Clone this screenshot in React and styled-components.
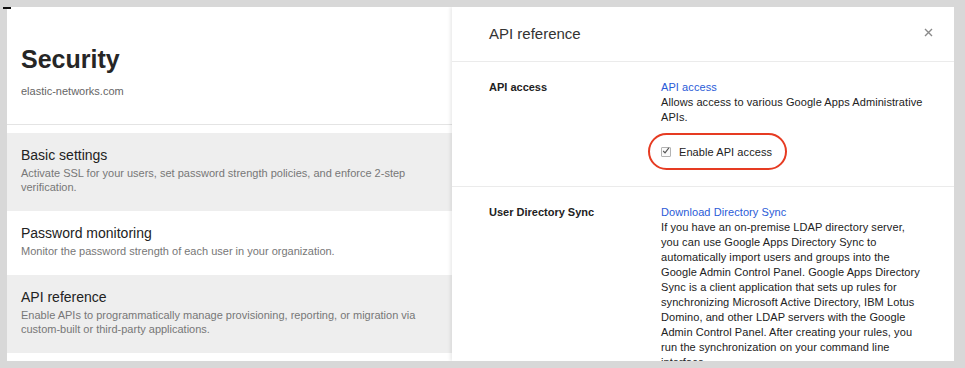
import React from "react"
import styled, { createGlobalStyle } from "styled-components"

const GlobalStyle = createGlobalStyle`
  html, body {
    margin: 0;
    padding: 0;
    background: #d8d8d8;
  }
  body {
    font-family: "Liberation Sans", Arial, sans-serif;
    -webkit-font-smoothing: antialiased;
  }
`

const Frame = styled.div`
  position: relative;
  width: 965px;
  height: 368px;
  box-sizing: border-box;
  padding: 7px 11px 7px 7px;
  background: #d8d8d8;
  overflow: hidden;
`
const Marker = styled.div`
  position: absolute;
  top: 7px;
  left: 3px;
  width: 8px;
  height: 2px;
  background: #111;
`
const Screen = styled.div`
  display: flex;
  height: 100%;
  overflow: hidden;
`
const Sidebar = styled.div`
  width: 445px;
  flex-shrink: 0;
  background: #fff;
`
const Header = styled.div`
  padding: 37px 14px 26px;
  border-bottom: 1px solid #e4e4e4;
`
const PageTitle = styled.h1`
  margin: 0;
  font-size: 25px;
  line-height: 30px;
  font-weight: bold;
  color: #262626;
`
const Domain = styled.div`
  margin-top: 11px;
  font-size: 11px;
  line-height: 13px;
  color: #666;
`
const Sections = styled.div`
  padding-top: 8px;
`
const Section = styled.div`
  padding: 13px 14px 17px;
  background: ${({ $active }) => ($active ? "#eeeeee" : "#fff")};
`
const SectionTitle = styled.div`
  font-size: 14px;
  line-height: 18px;
  color: #222;
`
const SectionInfo = styled.div`
  margin-top: 2px;
  font-size: 11px;
  line-height: 14px;
  color: #777;
`
const Drawer = styled.div`
  flex: 1;
  background: #fff;
  box-shadow: -2px 0 3px rgba(0, 0, 0, 0.08);
  position: relative;
`
const DrawerHead = styled.div`
  display: flex;
  align-items: center;
  justify-content: space-between;
  height: 55px;
  padding: 0 21px 2px 37px;
  box-sizing: border-box;
  border-bottom: 1px solid #ebebeb;
`
const DrawerTitle = styled.h2`
  margin: 0;
  font-size: 15px;
  font-weight: normal;
  color: #333;
`
const Close = styled.button`
  display: flex;
  padding: 0;
  border: 0;
  background: none;
  margin-top: -2px;
`
const Row = styled.div`
  display: grid;
  grid-template-columns: 172px 280px;
  padding: 18px 0 ${({ $pad }) => $pad}px 37px;
  border-bottom: ${({ $last }) => ($last ? "none" : "1px solid #ebebeb")};
  font-size: 11px;
  line-height: 15px;
  letter-spacing: 0.08px;
  color: #222;
`
const Label = styled.div`
  font-weight: bold;
  letter-spacing: 0;
`
const Value = styled.div``
const Link = styled.a`
  display: block;
  color: #2a5bd7;
  text-decoration: none;
`
const Line = styled.span`
  display: block;
  white-space: nowrap;
`
const CheckRow = styled.label`
  position: relative;
  display: flex;
  align-items: center;
  gap: 8px;
  height: 16px;
  margin-top: 19px;
`
const Box = styled.span`
  display: flex;
  width: 10px;
  height: 10px;
  box-sizing: border-box;
  border: 1px solid #b3b3b3;
  border-radius: 1px;
  background: #fafafa;
`
const Oval = styled.span`
  position: absolute;
  left: -13px;
  top: -11px;
  width: 139px;
  height: 37px;
  box-sizing: border-box;
  border: 2.5px solid #e63b22;
  border-radius: 19px;
  pointer-events: none;
`

const sections = [
  {
    title: "Basic settings",
    info: "Activate SSL for your users, set password strength policies, and enforce 2-step verification.",
    active: true,
  },
  {
    title: "Password monitoring",
    info: "Monitor the password strength of each user in your organization.",
  },
  {
    title: "API reference",
    info: "Enable APIs to programmatically manage provisioning, reporting, or migration via custom-built or third-party applications.",
    active: true,
  },
]

const syncText = [
  "If you have an on-premise LDAP directory server,",
  "you can use Google Apps Directory Sync to",
  "automatically import users and groups into the",
  "Google Admin Control Panel. Google Apps Directory",
  "Sync is a client application that sets up rules for",
  "synchronizing Microsoft Active Directory, IBM Lotus",
  "Domino, and other LDAP servers with the Google",
  "Admin Control Panel. After creating your rules, you",
  "run the synchronization on your command line",
  "interface.",
]

const App = () => {
  return (
    <>
      <GlobalStyle />
      <Frame>
        <Marker />
        <Screen>
          <Sidebar>
            <Header>
              <PageTitle>Security</PageTitle>
              <Domain>elastic-networks.com</Domain>
            </Header>
            <Sections>
              {sections.map(section => (
                <Section key={section.title} $active={section.active}>
                  <SectionTitle>{section.title}</SectionTitle>
                  <SectionInfo>{section.info}</SectionInfo>
                </Section>
              ))}
            </Sections>
          </Sidebar>
          <Drawer>
            <DrawerHead>
              <DrawerTitle>API reference</DrawerTitle>
              <Close aria-label="Close">
                <svg width="9" height="9" viewBox="0 0 9 9">
                  <path d="M1 1 L8 8 M8 1 L1 8" stroke="#8a8a8a" strokeWidth="1.4" />
                </svg>
              </Close>
            </DrawerHead>
            <Row $pad={26}>
              <Label>API access</Label>
              <Value>
                <Link href="#">API access</Link>
                <Line>Allows access to various Google Apps Administrative</Line>
                <Line>APIs.</Line>
                <CheckRow>
                  <Oval />
                  <Box>
                    <svg width="10" height="10" viewBox="0 0 10 10" style={{ margin: "-2px 0 0 0" }}>
                      <path d="M1.5 5 L3.8 7.4 L8.6 1" fill="none" stroke="#555" strokeWidth="1.4" />
                    </svg>
                  </Box>
                  Enable API access
                </CheckRow>
              </Value>
            </Row>
            <Row $pad={0} $last>
              <Label>User Directory Sync</Label>
              <Value>
                <Link href="#">Download Directory Sync</Link>
                {syncText.map(line => (
                  <Line key={line}>{line}</Line>
                ))}
              </Value>
            </Row>
          </Drawer>
        </Screen>
      </Frame>
    </>
  )
}

export default App
